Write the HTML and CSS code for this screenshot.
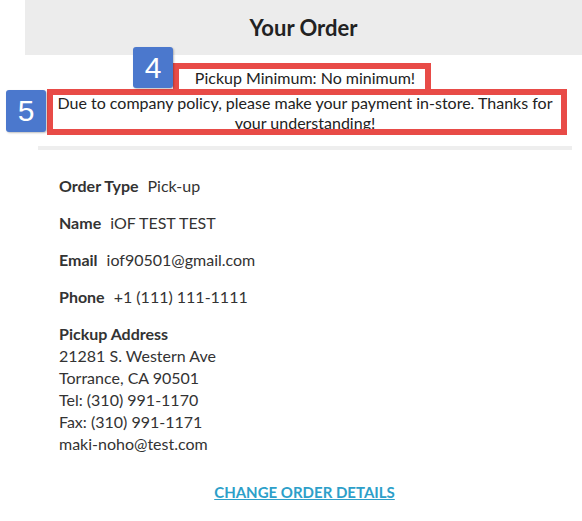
FILE: index.html
```html
<!DOCTYPE html>
<html>
<head>
<meta charset="utf-8">
<link rel="stylesheet" href="styles.css">
</head>
<body>
<div class="page">
  <div class="header">Your Order</div>
  <div class="notices">
    <p class="notice notice-min">Pickup Minimum: No minimum!</p>
    <p class="notice notice-policy">Due to company policy, please make your payment in-store. Thanks for your understanding!</p>
  </div>
  <div class="divider"></div>
  <div class="details">
    <div class="row"><span class="label">Order Type</span><span class="value">Pick-up</span></div>
    <div class="row"><span class="label">Name</span><span class="value">iOF TEST TEST</span></div>
    <div class="row"><span class="label">Email</span><span class="value">iof90501@gmail.com</span></div>
    <div class="row"><span class="label">Phone</span><span class="value">+1 (111) 111-1111</span></div>
    <div class="address">
      <div class="label">Pickup Address</div>
      <div>21281 S. Western Ave</div>
      <div>Torrance, CA 90501</div>
      <div>Tel: (310) 991-1170</div>
      <div>Fax: (310) 991-1171</div>
      <div>maki-noho@test.com</div>
    </div>
  </div>
  <div class="change"><a href="#" class="change-link">CHANGE ORDER DETAILS</a></div>

  <div class="anno-box anno-box-1"></div>
  <div class="anno-box anno-box-2"></div>
  <div class="badge badge-4">4</div>
  <div class="badge badge-5">5</div>
</div>
</body>
</html>
```
FILE: styles.css
```css
* { box-sizing: border-box; }
html, body { margin: 0; padding: 0; background: #fff; }
body {
  font-family: "Source Sans Pro", Lato, "Noto Sans", sans-serif;
  color: #333;
  font-size: 16px;
}
.page {
  position: relative;
  width: 582px;
  height: 521px;
  overflow: hidden;
}
.header {
  margin-left: 25px;
  height: 55px;
  background: #ececec;
  display: flex;
  align-items: center;
  justify-content: center;
  font-size: 22px;
  font-weight: 700;
  color: #222;
}
.notices {
  margin: 0 10px 0 38px;
  padding-top: 13px;
  text-align: center;
}
.notice {
  margin: 0;
  line-height: 20px;
  font-size: 16px;
  color: #222;
}
.notice-min { margin-bottom: 5px; }
.notice-policy { padding: 0 10px; }
.divider {
  margin: 13px 10px 0 38px;
  height: 4px;
  background: #eeeeee;
}
.details {
  padding: 25px 0 0 59px;
}
.row {
  height: 37px;
  line-height: 22px;
  font-size: 16px;
}
.label {
  font-weight: 700;
  margin-right: 9px;
}
.address {
  line-height: 22px;
  font-size: 16px;
}
.change {
  text-align: center;
  padding: 27px 0 0 27px;
}
.change-link {
  color: #2d9fc9;
  font-weight: 700;
  font-size: 15px;
  text-decoration: underline;
}
.anno-box {
  position: absolute;
  border: 6px solid #e84b47;
}
.anno-box-1 { left: 173px; top: 63px; width: 258px; height: 32px; }
.anno-box-2 { left: 47px; top: 89px; width: 520px; height: 46px; }
.badge {
  position: absolute;
  width: 40px;
  height: 41px;
  background: #4b78cd;
  color: #fff;
  border-radius: 3px;
  box-shadow: 1px 1px 2px rgba(0,0,0,0.25);
  font-family: "Liberation Sans", Arial, sans-serif;
  font-size: 30px;
  display: flex;
  align-items: center;
  justify-content: center;
}
.badge-4 { left: 133px; top: 47px; }
.badge-5 { left: 6px; top: 90px; height: 42px; }
```
